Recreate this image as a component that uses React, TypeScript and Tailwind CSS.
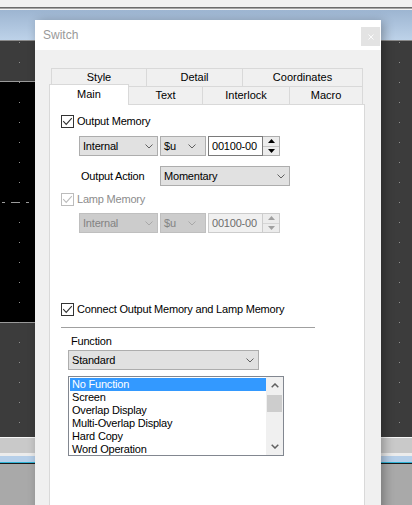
import React from "react";

const Chevron = ({ color = "#606060" }: { color?: string }) => (
  <svg width="8" height="5" viewBox="0 0 8 5" className="shrink-0">
    <path d="M0.5 0.5 L4 4 L7.5 0.5" fill="none" stroke={color} strokeWidth="1" />
  </svg>
);

function Select({ text, cls, disabled }: { text: string; cls: string; disabled?: boolean }) {
  return (
    <div
      className={
        "h-[20px] flex items-center justify-between border pl-[3px] shrink-0 " +
        cls +
        (disabled ? " border-[#bfbfbf] bg-[#cccccc] text-[#838383]" : " border-[#adadad] bg-[#e1e1e1] text-black")
      }
    >
      <span className="whitespace-nowrap">{text}</span>
      <Chevron color={disabled ? "#a8a8a8" : "#606060"} />
    </div>
  );
}

function Spin({ disabled }: { disabled?: boolean }) {
  const arrow = disabled ? "#a0a0a0" : "#000000";
  return (
    <div className="flex h-[20px]">
      <div
        className={
          "w-[55px] h-full border flex items-center pl-[3px] " +
          (disabled ? "border-[#cccccc] bg-[#f0f0f0] text-[#6d6d6d]" : "border-[#7a7a7a] bg-white text-black")
        }
      >
        00100-00
      </div>
      <div
        className={
          "w-[17px] h-full flex flex-col border border-l-0 bg-[#ececec] " +
          (disabled ? "border-[#cccccc]" : "border-[#adadad]")
        }
      >
        <div className={"flex-1 flex items-center justify-center border-b " + (disabled ? "border-[#d6d6d6]" : "border-[#c4c4c4]")}>
          <svg width="7" height="4" viewBox="0 0 7 4">
            <path d="M0 4 L3.5 0 L7 4 Z" fill={arrow} />
          </svg>
        </div>
        <div className="flex-1 flex items-center justify-center">
          <svg width="7" height="4" viewBox="0 0 7 4">
            <path d="M0 0 L3.5 4 L7 0 Z" fill={arrow} />
          </svg>
        </div>
      </div>
    </div>
  );
}

function Check({ label, disabled }: { label: string; disabled?: boolean }) {
  const c = disabled ? "#bcbcbc" : "#333333";
  return (
    <div className="flex items-center h-[13px] gap-[3px]">
      <span
        className={
          "w-[13px] h-[13px] border bg-white flex items-center justify-center shrink-0 " +
          (disabled ? "border-[#bcbcbc]" : "border-[#333333]")
        }
      >
        <svg width="11" height="11" viewBox="0 0 11 11">
          <path d="M1.2 5.2 L4.2 8.4 L9.8 2.2" fill="none" stroke={c} strokeWidth="1.1" />
        </svg>
      </span>
      <span className={"whitespace-nowrap tracking-[-0.2px] " + (disabled ? "text-[#8c8c8c]" : "text-black")}>{label}</span>
    </div>
  );
}

function ScrollArrow({ up }: { up?: boolean }) {
  return (
    <div className="h-[17px] flex items-center justify-center">
      <svg width="8" height="5" viewBox="0 0 8 5">
        <path d={up ? "M0.7 4.3 L4 1 L7.3 4.3" : "M0.7 0.7 L4 4 L7.3 0.7"} fill="none" stroke="#606060" strokeWidth="1.5" />
      </svg>
    </div>
  );
}

function Dialog() {
  const items = ["No Function", "Screen", "Overlap Display", "Multi-Overlap Display", "Hard Copy", "Word Operation"];
  return (
    <div className="absolute left-[35px] top-[20px] w-[346px] h-[500px] flex flex-col bg-[#f0f0f0] shadow-[3px_2px_10px_rgba(0,0,0,0.3)]">
      <div className="h-[30px] bg-white flex items-center justify-between pl-[8px] pr-[1px] shrink-0">
        <span className="text-[12px] text-[#999999]">Switch</span>
        <div className="w-[19px] h-[19px] mt-[3px] bg-[#e3e3e3] flex items-center justify-center">
          <svg width="6" height="6" viewBox="0 0 6 6">
            <path d="M0.5 0.5 L5.5 5.5 M5.5 0.5 L0.5 5.5" stroke="#fbfbfb" strokeWidth="1" />
          </svg>
        </div>
      </div>
      <div className="flex-1 pl-[14px] pt-[18px]">
        {/* back row */}
        <div className="flex ml-[2px] h-[18px]">
          <div className="w-[95px] border-l border-t border-[#d9d9d9] flex items-center justify-center">Style</div>
          <div className="w-[96px] border-l border-t border-[#d9d9d9] flex items-center justify-center">Detail</div>
          <div className="w-[121px] border-l border-t border-r border-[#d9d9d9] flex items-center justify-center">Coordinates</div>
        </div>
        {/* front row */}
        <div className="flex h-[18px] items-end relative z-10">
          <div className="w-[80px] h-[21px] mb-[-1px] bg-white border-l border-t border-r border-[#d9d9d9] flex items-center justify-center pb-[2px]">
            Main
          </div>
          <div className="w-[74px] h-[18px] border-t border-r border-[#d9d9d9] flex items-center justify-center">Text</div>
          <div className="w-[87px] h-[18px] border-t border-r border-[#d9d9d9] flex items-center justify-center">Interlock</div>
          <div className="w-[73px] h-[18px] border-t border-r border-[#d9d9d9] flex items-center justify-center">Macro</div>
        </div>
        {/* panel */}
        <div className="w-[316px] h-[420px] bg-white border border-[#d9d9d9] pl-[11px] pt-[10px] flex flex-col items-start tracking-[-0.2px]">
          <Check label="Output Memory" />
          <div className="flex gap-[2px] ml-[18px] mt-[8px]">
            <Select text="Internal" cls="w-[79px] pr-[4px]" />
            <Select text="$u" cls="w-[46px] pr-[9px]" />
            <Spin />
          </div>
          <div className="flex ml-[18px] mt-[10px] items-center">
            <div className="w-[81px] pl-[2px] whitespace-nowrap">Output Action</div>
            <Select text="Momentary" cls="w-[130px] pr-[4px]" />
          </div>
          <div className="mt-[7px]">
            <Check label="Lamp Memory" disabled />
          </div>
          <div className="flex gap-[2px] ml-[18px] mt-[7px]">
            <Select text="Internal" cls="w-[79px] pr-[4px]" disabled />
            <Select text="$u" cls="w-[46px] pr-[9px]" disabled />
            <Spin disabled />
          </div>
          <div className="mt-[70px]">
            <Check label="Connect Output Memory and Lamp Memory" />
          </div>
          <div className="mt-[11px] w-[254px] h-[1px] bg-[#a0a0a0]" />
          <div className="mt-[7px] ml-[10px] h-[13px]">Function</div>
          <div className="mt-[2px] ml-[7px]">
            <Select text="Standard" cls="w-[191px] pr-[4px]" />
          </div>
          <div className="mt-[6px] ml-[7px] w-[216px] h-[80px] border border-[#828790] flex bg-white">
            <div className="flex-1 pl-[1px] pt-[1px] overflow-hidden flex flex-col">
              {items.map((it, i) => (
                <div
                  key={it}
                  className={
                    "h-[13px] shrink-0 pl-[2px] whitespace-nowrap " + (i === 0 ? "bg-[#3399ff] text-white" : "text-black")
                  }
                >
                  {it}
                </div>
              ))}
            </div>
            <div className="w-[17px] bg-[#f0f0f0] flex flex-col shrink-0">
              <ScrollArrow up />
              <div className="flex-1">
                <div className="mx-[1px] mt-[1px] h-[17px] bg-[#cdcdcd]" />
              </div>
              <ScrollArrow />
            </div>
          </div>
        </div>
      </div>
    </div>
  );
}

export default function App() {
  return (
    <div className="relative w-[412px] h-[505px] overflow-hidden flex flex-col font-['Liberation_Sans',Arial,sans-serif] text-[11px] leading-[13px] text-black">
      <div className="h-[7px] bg-[#f0f0f0] shrink-0" />
      <div className="h-[1px] bg-[#6b6b6b] shrink-0" />
      <div className="h-[1px] bg-[#a3a3a3] shrink-0" />
      <div className="h-[1px] bg-[#f2f2f2] shrink-0" />
      <div className="h-[30px] bg-linear-to-b from-[#9db5d1] to-[#bdd2e9] shrink-0" />
      <div className="h-[1px] bg-[#8a8a8a] shrink-0" />
      <div className="relative h-[396px] bg-[#3c3c3c] shrink-0">
        <div className="h-[40px]" />
        <div className="w-[240px] h-[242px] bg-black border-y border-[#9a9a9a]" />
        <svg className="absolute inset-0" width="412" height="396">
          <defs>
            <pattern id="dots" x="19" y="1" width="20" height="20" patternUnits="userSpaceOnUse">
              <rect width="1" height="1" fill="#909090" />
            </pattern>
          </defs>
          <rect x="0" y="0" width="412" height="382" fill="url(#dots)" />
          <rect x="2" y="161" width="3" height="1" fill="#9c9c9c" />
          <rect x="11" y="161" width="9" height="1" fill="#9c9c9c" />
          <rect x="26" y="161" width="3" height="1" fill="#9c9c9c" />
        </svg>
      </div>
      <div className="h-[1px] bg-[#f7f7f7] shrink-0" />
      <div className="h-[15px] bg-[#c9c9c9] shrink-0" />
      <div className="h-[3px] bg-[#ececec] shrink-0" />
      <div className="h-[6px] bg-[#b6cfe9] shrink-0" />
      <div className="h-[1px] bg-[#2fb3d6] shrink-0" />
      <div className="h-[1px] bg-[#1a1a1a] shrink-0" />
      <div className="flex-1 bg-[#a9a9a9]" />
      <Dialog />
    </div>
  );
}
